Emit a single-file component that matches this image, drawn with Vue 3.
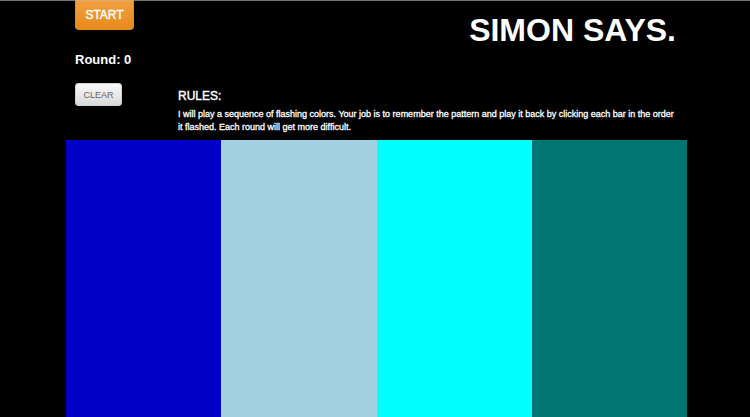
<script setup>
import { ref } from 'vue'

const round = ref(0)
const sequence = ref([])
const active = ref(-1)
const colors = ['blue', 'light', 'cyan', 'teal']
let position = 0

function flash(index) {
  active.value = index
  setTimeout(() => (active.value = -1), 300)
}

function nextRound() {
  round.value++
  position = 0
  sequence.value.push(Math.floor(Math.random() * colors.length))
  sequence.value.forEach((bar, i) => setTimeout(() => flash(bar), 600 * (i + 1)))
}

function clear() {
  round.value = 0
  sequence.value = []
  position = 0
}

function start() {
  clear()
  nextRound()
}

function play(index) {
  if (!sequence.value.length) return
  flash(index)
  if (sequence.value[position] !== index) return clear()
  position++
  if (position === sequence.value.length) nextRound()
}
</script>

<template>
  <main class="page">
    <div class="game">
      <header class="top">
        <div class="controls">
          <button class="start" type="button" @click="start">START</button>
          <p class="round">Round: {{ round }}</p>
          <button class="clear" type="button" @click="clear">CLEAR</button>
        </div>
        <div class="intro">
          <h1>SIMON SAYS.</h1>
          <h2>RULES:</h2>
          <p class="rules">
            I will play a sequence of flashing colors. Your job is to remember the pattern and play it back by clicking each bar in the order it flashed. Each round will get more difficult.
          </p>
        </div>
      </header>
      <div class="bars">
        <button
          v-for="(color, i) in colors"
          :key="color"
          type="button"
          class="bar"
          :class="[color, { lit: active === i }]"
          :aria-label="color"
          @click="play(i)"
        ></button>
      </div>
    </div>
  </main>
</template>

<style>
body {
  background: #000;
}
</style>

<style scoped>
.page {
  box-sizing: border-box;
  min-height: 100vh;
  display: flex;
  padding: 0 63px 0 66px;
  border-top: 1px solid #737373;
  background: #000;
  color: #fff;
  font-family: "Liberation Sans", Arial, sans-serif;
}

.game {
  flex: 1;
  display: flex;
  flex-direction: column;
}

.top {
  display: flex;
  gap: 43px;
  padding: 0 11px 6px 9px;
}

.controls {
  display: flex;
  flex-direction: column;
  align-items: flex-start;
  width: 60px;
}

button {
  font-family: inherit;
  cursor: pointer;
}

.start {
  width: 59px;
  height: 30px;
  margin-top: -1px;
  padding: 0;
  border: 1px solid #e08a20;
  border-top-color: #e0ab70;
  border-radius: 0 0 4px 4px;
  background: linear-gradient(#f0a040, #e88a1c);
  color: #fff;
  font-size: 12px;
  -webkit-text-stroke: 0.4px #fff;
}

.round {
  margin: 21px 0 14px;
  font-size: 13px;
  line-height: 18px;
  font-weight: bold;
  white-space: nowrap;
}

.clear {
  width: 47px;
  height: 23px;
  padding: 0;
  border: 1px solid #d0d0d0;
  border-radius: 3px;
  background: linear-gradient(#fafafa, #d8d8d8);
  color: #666;
  font-size: 9px;
}

.intro {
  flex: 1;
}

h1 {
  margin: 11px 0 40px;
  font-size: 32px;
  line-height: 36px;
  text-align: right;
}

h2 {
  margin: 0 0 4px;
  font-size: 12px;
  line-height: 16px;
  font-weight: normal;
  -webkit-text-stroke: 0.4px #fff;
}

.rules {
  margin: 0;
  font-size: 9px;
  line-height: 13px;
  -webkit-text-stroke: 0.3px #fff;
}

.bars {
  flex: 1;
  display: grid;
  grid-template-columns: repeat(4, 1fr);
}

.bar {
  min-height: 160px;
  padding: 0;
  border: 0;
}

.bar.lit {
  filter: brightness(1.5);
}

.blue {
  background: #0000c8;
}

.light {
  background: #a4d1e1;
}

.cyan {
  background: #00ffff;
}

.teal {
  background: #007572;
}
</style>
